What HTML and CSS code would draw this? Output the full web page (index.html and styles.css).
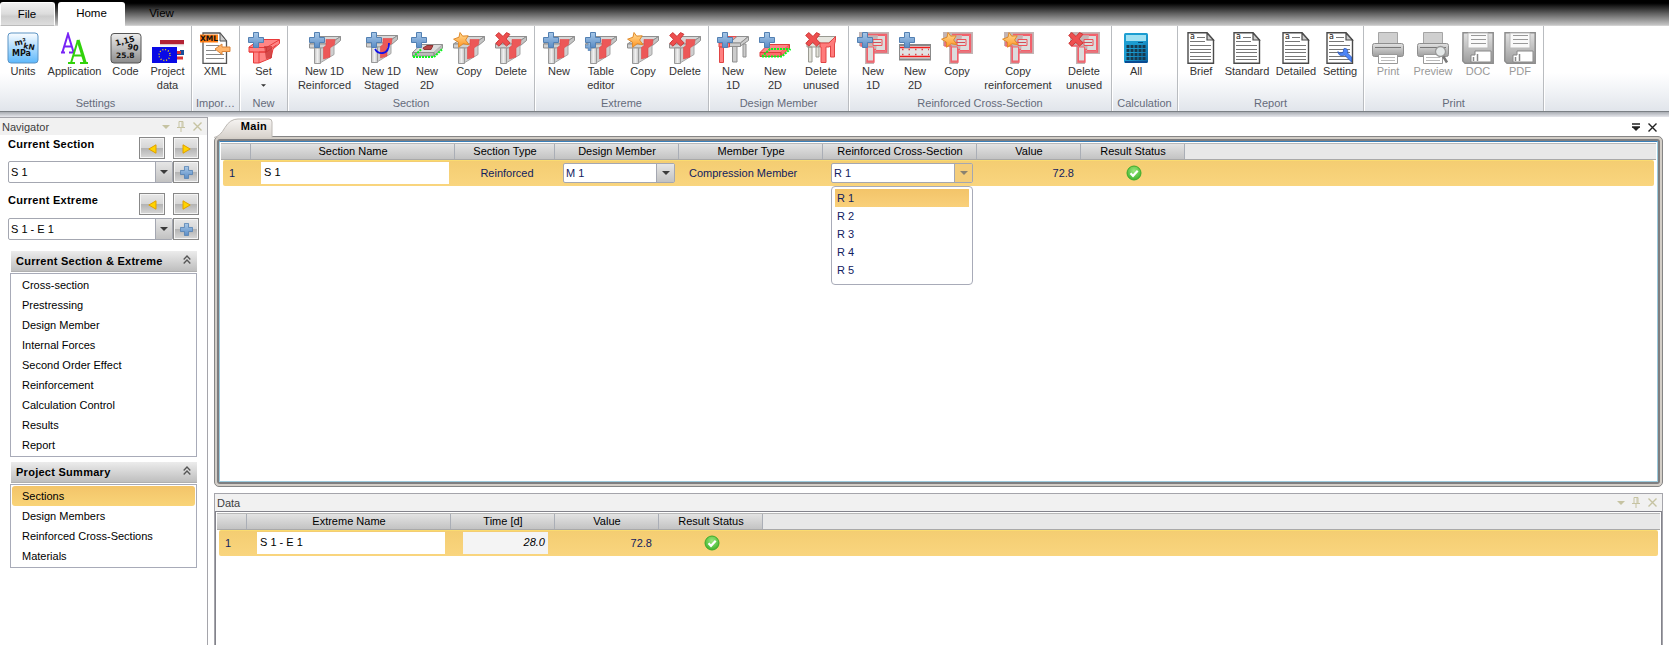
FILE: index.html
```html
<!DOCTYPE html>
<html lang="en">
<head>
<meta charset="utf-8">
<title>Section design</title>
<link rel="stylesheet" href="styles.css">
</head>
<body>
<svg class="defs" aria-hidden="true">
  <defs>
    <linearGradient id="gBlue" x1="0" y1="0" x2="0" y2="1"><stop offset="0" stop-color="#a9c9e8"/><stop offset="1" stop-color="#5a8cc6"/></linearGradient>
    <linearGradient id="gStar" x1="0" y1="0" x2="0" y2="1"><stop offset="0" stop-color="#ffdf9a"/><stop offset="1" stop-color="#ff9320"/></linearGradient>
    <linearGradient id="gUnits" x1="0" y1="0" x2="0" y2="1"><stop offset="0" stop-color="#fbfdff"/><stop offset="1" stop-color="#5db8fb"/></linearGradient>
    <linearGradient id="gCode" x1="0" y1="0" x2="0" y2="1"><stop offset="0" stop-color="#ededed"/><stop offset="1" stop-color="#8b8b8b"/></linearGradient>
    <linearGradient id="gCalc" x1="0" y1="0" x2="1" y2="1"><stop offset="0" stop-color="#1e9fd2"/><stop offset=".5" stop-color="#1a9bd0"/><stop offset="1" stop-color="#0a5f9c"/></linearGradient>
    <linearGradient id="gGrey" x1="0" y1="0" x2="0" y2="1"><stop offset="0" stop-color="#e2e2e2"/><stop offset="1" stop-color="#9c9c9c"/></linearGradient>
    <linearGradient id="gWeb" x1="0" y1="0" x2="1" y2="0"><stop offset="0" stop-color="#c4c4c4"/><stop offset=".5" stop-color="#f0f0f0"/><stop offset="1" stop-color="#c4c4c4"/></linearGradient>
    <radialGradient id="gOk" cx=".5" cy=".35" r=".6"><stop offset="0" stop-color="#9be87c"/><stop offset="1" stop-color="#47b735"/></radialGradient>
  </defs>
  <symbol id="plus" viewBox="0 0 16 16"><path d="M5.5.5h5v5h5v5h-5v5h-5v-5h-5v-5h5z" fill="url(#gBlue)" stroke="#5380b2"/></symbol>
  <symbol id="star" viewBox="0 0 18 16"><path d="M7 .5l2.6 3.6 5.6-.3-2.6 4.2 3.4 4.7-5.8-1-4.6 3.6-.2-5.2L.6 7.200l5.400-2z" fill="url(#gStar)" stroke="#e08a2a"/></symbol>
  <symbol id="cross" viewBox="0 0 16 15"><path d="M3.800.600L8 4.500 11.500.600l3.400 1.700-3.800 4.600 4 4-3.600 3.200L7.700 10.300 4 14.200.800 11.400l3.700-4.100L.700 3.400z" fill="#ee4f4f" stroke="#cc3838"/></symbol>
  <symbol id="beam" viewBox="0 0 32 32">
    <path d="M11 4.500h20.500L20.500 12H.500z" fill="#d6d6d6" stroke="#8f8f8f"/>
    <path d="M20.500 12l11-7.500v4l-6 5-5 2.500z" fill="#c4c4c4" stroke="#8f8f8f"/>
    <path d="M.500 12h20v4H.500z" fill="#d0d0d0" stroke="#8f8f8f"/>
    <path d="M11 16.500l14-3v9L11 31z" fill="#cfcfcf" stroke="#a5a5a5"/>
    <path d="M17 7.500h9l-.500 5-4.500 3.500v9l-6.500 2v-11.500l2.500-2z" fill="#ec5858" stroke="#e04848" stroke-width=".600"/>
    <path d="M5.500 16h6v15.500h-6z" fill="url(#gWeb)" stroke="#999"/>
  </symbol>
  <symbol id="slab" viewBox="0 0 32 32"><path d="M10 12.500h21.500L23 20.500H1.500z" fill="#dcdcdc" stroke="#8f8f8f"/><path d="M1.500 20.500H23v3.500H1.500zM31.500 12.500v3.500L23 24v-3.500" fill="#bbb" stroke="#8f8f8f"/><path d="M12 16l4-2.500h6l-2 4h-7z" fill="#b64545" stroke="#8d3434"/><path d="M2 25l8-7.500M2 25h21l9-8.500" fill="none" stroke="#0bf51c" stroke-width="2" stroke-dasharray="2 1"/></symbol>
  <symbol id="slabred" viewBox="0 0 32 32"><path d="M9 12.500h21.500L22 20.500H1z" fill="#ff8585" stroke="#dd3d3d"/><path d="M1 20.500h21v4H1zM30.500 12.500V16L22 24.500v-4" fill="#ff6b6b" stroke="#dd3d3d"/><path d="M3 24.500l8-7.500h20M3 24.500h20l8.500-7.500" fill="none" stroke="#0bf51c" stroke-width="2" stroke-dasharray="2 1"/></symbol>
  <symbol id="table1d" viewBox="0 0 32 32"><path d="M10 4.500h10L12.500 11H2z" fill="#ff8b8b" stroke="#e05050"/><path d="M20 4.500h11L23.500 11h-11z" fill="#ddd" stroke="#8f8f8f"/><path d="M23.500 11l8-6.500v4L23.500 14zM12.500 11h11v3.500h-11zM15.500 14.500h4.500V30h-4.500zM26 12h3v13h-3z" fill="#ccc" stroke="#8f8f8f"/><path d="M2 11h10.500v4H2zM2.500 15h4v15.500h-4z" fill="#ff8080" stroke="#e04545"/></symbol>
  <symbol id="tabledel" viewBox="0 0 32 32"><path d="M10 4.500h21L23.500 11H2z" fill="#e6e6df" stroke="#9a9a92"/><path d="M2 11h13v4H2zM3.500 15H7v15H3.500zM11 14h3v11h-3z" fill="#e3e3db" stroke="#9a9a92"/><path d="M15 11h9l6.500-6.500v4L29.500 12v13h-4V14L24 15h-3v15.500h-5V15h-1z" fill="#ff7b7b" stroke="#e04545"/></symbol>
  <symbol id="cs" viewBox="0 0 32 32"><path d="M2 0h30v22H17v10H8V14H2z" fill="#c3b5b5"/><path d="M4 10.500h18v-4h4v11H17V30H10V14H4zM11 2.500h18.500v17.500H17" fill="none" stroke="#f2606b" stroke-width="1.300"/><path d="M10.500 15h6v14h-6zM21 3.500h7.500v15H19" fill="#dcdcdc" stroke="#f2606b"/><path d="M16 7.500h9v6h-9z" fill="#ddd" stroke="#ef5058"/><path d="M16 10.500h8" stroke="#d34d56"/></symbol>
  <symbol id="cs2d" viewBox="0 0 32 32"><path d="M.500 12.500h31v15H.500z" fill="#e2e2e2" stroke="#8a8a8a"/><path d="M0 13h32M0 27.500h32" stroke="#888" stroke-width="2"/><path d="M1 15.500h30M1 24.500h30" stroke="#f01e1e" stroke-width="1.400"/><path d="M3 17.500h27M3 22.500h27" stroke="#d44" stroke-width="1.500" stroke-dasharray="1.500 5"/></symbol>
  <symbol id="page" viewBox="0 0 28 32"><path d="M1 .700h19l6.500 7.500v23H1z" fill="#fff" stroke="#4a4a4a" stroke-width="1.400"/><path d="M20 1v7h6.500z" fill="#ccc" stroke="#4a4a4a" stroke-width="1.200"/><path d="M10 5.500h8M3 9.500h15M3 13.500h21M3 17.500h21M3 20.500h21M3 24.500h21M3 27.500h21" stroke="#777"/></symbol>
  <symbol id="printer" viewBox="0 0 32 32"><path d="M6.500.500h19V12h-19z" fill="#cfcfcf" stroke="#a5a5a5"/><rect x=".500" y="11.500" width="31" height="13" rx="2" fill="url(#gGrey)" stroke="#8e8e8e"/><path d="M3 15.500h26" stroke="#777"/><path d="M6.500 22.500h19v9h-19z" fill="#fff" stroke="#999"/><path d="M9 25.500h14M9 28.500h14" stroke="#bbb"/></symbol>
  <symbol id="disk" viewBox="0 0 32 32"><path d="M1 .800h30.200v30.400H3L.800 29z" fill="url(#gGrey)" stroke="#8d8d8d" stroke-width="1.500"/><path d="M6 1h20v15H6z" fill="#fafafa" stroke="#bbb"/><path d="M9 3.500h15M9 7.500h15M9 11.500h15" stroke="#999"/><path d="M9 23h4v-4h16v11H9z" fill="#fff" stroke="#888"/><path d="M15.500 22v7M11.500 25v4" stroke="#888" stroke-width="1.500"/></symbol>
  <symbol id="ok" viewBox="0 0 16 16"><circle cx="8" cy="8" r="7" fill="url(#gOk)" stroke="#3dab2c"/><path d="M4.500 8.300l2.500 2.500 4.700-5" fill="none" stroke="#fff" stroke-width="2.200"/></symbol>
  <symbol id="caret" viewBox="0 0 8 4"><path d="M0 0h8L4 4z" fill="currentColor"/></symbol>
  <symbol id="pin" viewBox="0 0 8 11"><path d="M2 6.500V.500h4v6M5 1v5M0 6.500h8M4 7v4" fill="none" stroke="currentColor"/></symbol>
  <symbol id="close" viewBox="0 0 9 9"><path d="M.500.500l8 8M8.500.500l-8 8" fill="none" stroke="currentColor" stroke-width="1.400"/></symbol>
  <symbol id="chev" viewBox="0 0 8 9"><path d="M.700 4.500L4 1l3.300 3.500M.700 8.500L4 5l3.300 3.500" fill="none" stroke="#555" stroke-width="1.300"/></symbol>
  <symbol id="left" viewBox="0 0 9 10"><path d="M8 .800v8.400L.800 5z" fill="#ffd400" stroke="#e0a000"/></symbol>
  <symbol id="right" viewBox="0 0 9 10"><path d="M1 .800v8.400L8.200 5z" fill="#ffd400" stroke="#e0a000"/></symbol>
</svg>

<header class="tabs">
  <div class="tab file">File</div><div class="tab home">Home</div><div class="tab view">View</div>
</header>

<div class="ribbon">
  <section class="group g-settings">
    <div class="buttons">
      <div class="btn"><svg class="ico" viewBox="0 0 32 32"><rect x="1" y="1" width="30" height="30" rx="3" fill="url(#gUnits)" stroke="#5b93c4"/><g font-family="DejaVu Sans" font-weight="bold" fill="#111"><text x="8" y="14" font-size="8" transform="rotate(-12 8 14)">m²</text><text x="16" y="16" font-size="7.500" transform="rotate(12 16 16)">kN</text><text x="5" y="24" font-size="8">MPa</text></g></svg><span>Units</span></div>
      <div class="btn"><svg class="ico" viewBox="0 0 32 32"><path d="M2 20.500h4M10 20.500h6M3.500 20L9 2l5.500 18M5.500 14.500h7" fill="none" stroke="#7723f5" stroke-width="2"/><path d="M9 31h7M21 31h8M12 31l7-23M14.500 23.500h9.500" fill="none" stroke="#31d20b" stroke-width="2"/><path d="M19 8l7 22.500" stroke="#31d20b" stroke-width="3.200"/></svg><span>Application</span></div>
      <div class="btn"><svg class="ico" viewBox="0 0 32 32"><rect x="1" y="1.500" width="30" height="29.500" rx="3" fill="url(#gCode)" stroke="#555"/><g font-family="DejaVu Sans" font-weight="bold" fill="#111"><text x="6" y="14" font-size="8" transform="rotate(-14 6 14)">1,15</text><text x="17" y="17" font-size="8" transform="rotate(10 17 17)">90</text><text x="6" y="26" font-size="7.500">25.8</text></g></svg><span>Code</span></div>
      <div class="btn"><svg class="ico" viewBox="0 0 32 32"><path d="M8 8h24v4.500H8z" fill="#b22234"/><path d="M8 12.500h24v2H8z" fill="#eee"/><path d="M25 20h3v-2h4v5h-7z" fill="#1b4f9b"/><path d="M25 19h4v3h-4zM25 24.500h6v3h-6z" fill="#d33"/><path d="M0 15h25v16H0z" fill="#0909e6"/><circle cx="12.500" cy="23" r="5.500" fill="none" stroke="#ffe600" stroke-width="1.300" stroke-dasharray="1 1.880"/></svg><span>Project<br>data</span></div>
    </div><div class="name">Settings</div>
  </section>
  <section class="group g-import">
    <div class="buttons"><div class="btn"><svg class="ico" viewBox="0 0 32 32"><path d="M4 1h17l6.500 8v22.500H4z" fill="#fff" stroke="#555" stroke-width="1.300"/><path d="M21 1v8h6.500z" fill="#ccc" stroke="#555"/><path d="M7 13.500h13M7 18.500h10M7 22.500h18M7 26.500h18" stroke="#888"/><path d="M1 2.500h18v8H1z" fill="#ff7d13"/><text x="1" y="9.300" font-family="DejaVu Sans" font-weight="bold" font-size="7.500" fill="#111">XML</text><path d="M16 17l7-5v3h8v4.500h-8v3z" fill="#ffb56a" stroke="#dc8438"/></svg><span>XML</span></div></div>
    <div class="name">Impor…</div>
  </section>
  <section class="group g-new">
    <div class="buttons"><div class="btn"><svg class="ico" viewBox="0 0 32 32"><path d="M12 7.500h19.500v4L25 17l-2 9-12 5H5.500V20H1v-5z" fill="#ff8585" stroke="#e83a3a"/><path d="M1 15.500h17.500L31 8M18.500 15.500V20H11v11M18.500 20l10-7M1 20h17" fill="none" stroke="#e83a3a"/><path d="M16 14h8v12l-6 1z" fill="#c83737" opacity=".75"/><use href="#plus" x="0" y="0" width="16" height="16"/></svg><span>Set</span><svg class="setcaret"><use href="#caret"/></svg></div></div>
    <div class="name">New</div>
  </section>
  <section class="group g-section">
    <div class="buttons">
      <div class="btn"><svg class="ico" viewBox="0 0 32 32"><use href="#beam"/><use href="#plus" width="16" height="16"/></svg><span>New 1D<br>Reinforced</span></div>
      <div class="btn"><svg class="ico" viewBox="0 0 32 32"><use href="#beam" y="-1"/><path d="M9 17q3 5 8 4 6-1 6-10" fill="none" stroke="#1111e8" stroke-width="1.800"/><use href="#plus" width="16" height="16"/></svg><span>New 1D<br>Staged</span></div>
      <div class="btn"><svg class="ico" viewBox="0 0 32 32"><use href="#slab"/><use href="#plus" width="16" height="16"/></svg><span>New<br>2D</span></div>
      <div class="btn"><svg class="ico" viewBox="0 0 32 32"><use href="#beam"/><use href="#star" width="18" height="16"/></svg><span>Copy</span></div>
      <div class="btn"><svg class="ico" viewBox="0 0 32 32"><use href="#beam"/><use href="#cross" width="16" height="15"/></svg><span>Delete</span></div>
    </div><div class="name">Section</div>
  </section>
  <section class="group g-extreme">
    <div class="buttons">
      <div class="btn"><svg class="ico" viewBox="0 0 32 32"><use href="#beam"/><use href="#plus" width="16" height="16"/></svg><span>New</span></div>
      <div class="btn"><svg class="ico" viewBox="0 0 32 32"><use href="#beam"/><use href="#plus" x="0" y="10" width="9" height="9"/><use href="#plus" width="16" height="16"/></svg><span>Table<br>editor</span></div>
      <div class="btn"><svg class="ico" viewBox="0 0 32 32"><use href="#beam"/><use href="#star" width="18" height="16"/></svg><span>Copy</span></div>
      <div class="btn"><svg class="ico" viewBox="0 0 32 32"><use href="#beam"/><use href="#cross" width="16" height="15"/></svg><span>Delete</span></div>
    </div><div class="name">Extreme</div>
  </section>
  <section class="group g-design">
    <div class="buttons">
      <div class="btn"><svg class="ico" viewBox="0 0 32 32"><use href="#table1d"/><use href="#plus" width="16" height="16"/></svg><span>New<br>1D</span></div>
      <div class="btn"><svg class="ico" viewBox="0 0 32 32"><use href="#slabred"/><use href="#plus" width="16" height="16"/></svg><span>New<br>2D</span></div>
      <div class="btn"><svg class="ico" viewBox="0 0 32 32"><use href="#tabledel"/><use href="#cross" width="16" height="15"/></svg><span>Delete<br>unused</span></div>
    </div><div class="name">Design Member</div>
  </section>
  <section class="group g-rcs">
    <div class="buttons">
      <div class="btn"><svg class="ico" viewBox="0 0 32 32"><use href="#cs"/><use href="#plus" width="16" height="16"/></svg><span>New<br>1D</span></div>
      <div class="btn"><svg class="ico" viewBox="0 0 32 32"><use href="#cs2d"/><use href="#plus" width="16" height="16"/></svg><span>New<br>2D</span></div>
      <div class="btn"><svg class="ico" viewBox="0 0 32 32"><use href="#cs"/><use href="#star" width="18" height="16"/></svg><span>Copy</span></div>
      <div class="btn"><svg class="ico" viewBox="0 0 32 32"><use href="#cs"/><use href="#star" width="18" height="16"/></svg><span>Copy<br>reinforcement</span></div>
      <div class="btn"><svg class="ico" viewBox="0 0 32 32"><use href="#cs"/><use href="#cross" width="16" height="15"/></svg><span>Delete<br>unused</span></div>
    </div><div class="name">Reinforced Cross-Section</div>
  </section>
  <section class="group g-calc">
    <div class="buttons"><div class="btn"><svg class="ico" viewBox="0 0 32 32"><rect x="4" y="1" width="24" height="30" rx="1.500" fill="url(#gCalc)"/><path d="M6 3h20v6H6z" fill="#9fe0f2"/><path d="M5 30h22" stroke="#0a4b92" stroke-width="2"/><path d="M18 10.500h5" stroke="#064a78"/><path d="M6.500 14.500h19M6.500 18.500h19M6.500 22.500h19M6.500 26.500h19" stroke="#173a4f" stroke-width="3" stroke-dasharray="3 1"/></svg><span>All</span></div></div>
    <div class="name">Calculation</div>
  </section>
  <section class="group g-report">
    <div class="buttons">
      <div class="btn"><svg class="ico page" viewBox="0 0 28 32"><use href="#page" width="28" height="32"/><text class="pa" x="3" y="7">a</text></svg><span>Brief</span></div>
      <div class="btn"><svg class="ico page" viewBox="0 0 28 32"><use href="#page" width="28" height="32"/><text class="pa" x="3" y="7">a</text></svg><span>Standard</span></div>
      <div class="btn"><svg class="ico page" viewBox="0 0 28 32"><use href="#page" width="28" height="32"/><text class="pa" x="3" y="7">a</text></svg><span>Detailed</span></div>
      <div class="btn"><svg class="ico page" viewBox="0 0 28 32"><use href="#page" width="28" height="32"/><text class="pa" x="3" y="7">a</text><path d="M18 16.500l-1 4-3.500.500-1.500-1.500c0 4 4 5 6.500 3.500l7 7v-5l-4-4c1-3-1-5-3.500-4.500z" fill="#4d86f7" stroke="#2956b8" stroke-width=".800"/></svg><span>Setting</span></div>
    </div><div class="name">Report</div>
  </section>
  <section class="group g-print">
    <div class="buttons">
      <div class="btn off"><svg class="ico"><use href="#printer"/></svg><span>Print</span></div>
      <div class="btn off"><svg class="ico" viewBox="0 0 32 32"><use href="#printer"/><path d="M26 24l4 6.500" stroke="#777" stroke-width="2.500"/><circle cx="23.500" cy="19.500" r="5" fill="#e4e8e8" stroke="#999" stroke-width="1.300"/></svg><span>Preview</span></div>
      <div class="btn off"><svg class="ico"><use href="#disk"/></svg><span>DOC</span></div>
      <div class="btn off"><svg class="ico"><use href="#disk"/></svg><span>PDF</span></div>
    </div><div class="name">Print</div>
  </section>
</div>
<div class="shadow"></div>

<main class="work">
  <aside class="nav">
    <div class="bar"><span>Navigator</span><div class="tools"><svg class="t-caret"><use href="#caret"/></svg><svg class="t-pin"><use href="#pin"/></svg><svg class="t-x"><use href="#close"/></svg></div></div>
    <div class="picker first">
      <div class="line"><b>Current Section</b><div class="sq"><svg class="arr"><use href="#left"/></svg></div><div class="sq"><svg class="arr"><use href="#right"/></svg></div></div>
      <div class="line"><div class="combo"><span>S 1</span><i><svg class="c-caret"><use href="#caret"/></svg></i></div><div class="sq add"><svg class="add-ico"><use href="#plus"/></svg></div></div>
    </div>
    <div class="picker second">
      <div class="line"><b>Current Extreme</b><div class="sq"><svg class="arr"><use href="#left"/></svg></div><div class="sq"><svg class="arr"><use href="#right"/></svg></div></div>
      <div class="line"><div class="combo"><span>S 1 - E 1</span><i><svg class="c-caret"><use href="#caret"/></svg></i></div><div class="sq add"><svg class="add-ico"><use href="#plus"/></svg></div></div>
    </div>
    <div class="panel">
      <div class="phead"><b>Current Section &amp; Extreme</b><svg class="chev"><use href="#chev"/></svg></div>
      <ul><li>Cross-section</li><li>Prestressing</li><li>Design Member</li><li>Internal Forces</li><li>Second Order Effect</li><li>Reinforcement</li><li>Calculation Control</li><li>Results</li><li>Report</li></ul>
    </div>
    <div class="panel">
      <div class="phead"><b>Project Summary</b><svg class="chev"><use href="#chev"/></svg></div>
      <ul><li class="sel">Sections</li><li>Design Members</li><li>Reinforced Cross-Sections</li><li>Materials</li></ul>
    </div>
  </aside>

  <div class="content">
    <div class="doctabs">
      <div class="doctab"><svg class="tabshape" viewBox="0 0 59 19"><defs><linearGradient id="gTab" x1="0" y1="0" x2="0" y2="1"><stop offset="0" stop-color="#f6f4f2"/><stop offset="1" stop-color="#d8d3cd"/></linearGradient></defs><path d="M0 19Q6 18 11 9 16 .500 24 .500h31q3 0 3 3V19" fill="url(#gTab)" stroke="#bdb9b4"/></svg><b>Main</b></div>
      <div class="doctools"><svg class="d-menu" viewBox="0 0 8 8"><path d="M0 1h8M0 4h8" stroke="#222" stroke-width="1.600"/><path d="M0 4h8L4 8z" fill="#222"/></svg><svg class="d-x"><use href="#close"/></svg></div>
    </div>
    <div class="frame"><div class="frame-mid"><div class="frame-in">
      <div class="grid cols-main head"><div></div><div>Section Name</div><div>Section Type</div><div>Design Member</div><div>Member Type</div><div>Reinforced Cross-Section</div><div>Value</div><div>Result Status</div></div>
      <div class="grid cols-main row">
        <div class="num">1</div>
        <div class="cell-in"><div class="input">S 1</div></div>
        <div class="mid">Reinforced</div>
        <div class="cell-combo"><div class="combo sm"><span>M 1</span><i><svg class="c-caret"><use href="#caret"/></svg></i></div></div>
        <div class="lft">Compression Member</div>
        <div class="cell-combo open"><div class="combo sm"><span>R 1</span><i><svg class="c-caret"><use href="#caret"/></svg></i></div>
          <div class="menu"><div class="hot">R 1</div><div>R 2</div><div>R 3</div><div>R 4</div><div>R 5</div></div></div>
        <div class="rgt">72.8</div>
        <div class="mid"><svg class="ok"><use href="#ok"/></svg></div>
      </div>
    </div></div></div>

    <div class="data">
      <div class="bar"><span>Data</span><div class="tools"><svg class="t-caret"><use href="#caret"/></svg><svg class="t-pin"><use href="#pin"/></svg><svg class="t-x"><use href="#close"/></svg></div></div>
      <div class="dbody">
        <div class="grid cols-data head"><div></div><div>Extreme Name</div><div>Time [d]</div><div>Value</div><div>Result Status</div></div>
        <div class="grid cols-data row">
          <div class="num">1</div>
          <div class="cell-in"><div class="input">S 1 - E 1</div></div>
          <div class="cell-time"><div class="input ro">28.0</div></div>
          <div class="rgt">72.8</div>
          <div class="mid"><svg class="ok"><use href="#ok"/></svg></div>
        </div>
      </div>
    </div>
  </div>
</main>
</body>
</html>
```
FILE: styles.css
```css
* { box-sizing: border-box; }
html, body { height: 100%; }
body { margin: 0; height: 645px; overflow: hidden; background: #fff; color: #000; font: 11px/14px "Liberation Sans", Arial, sans-serif; display: flex; flex-direction: column; }
svg { display: block; flex: none; }
.defs { position: absolute; width: 0; height: 0; }
b { letter-spacing: .27px; }

/* window tabs */
.tabs { flex: none; height: 26px; display: flex; align-items: flex-end; background: linear-gradient(#000 0, #000 12%, #606060 52%, #c6c6c6 97%, #e6e6e6 100%); }
.tab { height: 24px; line-height: 24px; text-align: center; font-size: 11.5px; }
.file { width: 55px; margin-right: 3px; padding-right: 1px; line-height: 23px; border: 1px solid #fff; border-bottom-color: #bbb; border-radius: 3px 3px 0 0; background: linear-gradient(#f1f1f1, #dcdcdc 50%, #cdcdcd 60%, #dedede); }
.home { width: 67px; background: #fff; border-radius: 3px 3px 0 0; line-height: 23px; }
.view { width: 73px; line-height: 23px; }

/* ribbon */
.ribbon { flex: none; height: 85px; display: flex; background: linear-gradient(#fff 55%, #f2f4f7 75%, #e1e5eb); }
.group { display: flex; flex-direction: column; justify-content: space-between; border-right: 1px solid #b9bcc0; padding: 6px 0 1px; box-shadow: 1px 0 0 #fff; }
.buttons { display: grid; }
.btn { display: flex; flex-direction: column; align-items: center; text-align: center; color: #333; white-space: nowrap; }
.btn span { line-height: 14px; }
.ico { width: 32px; height: 32px; }
.ico.page { width: 28px; }
.pa { font: 8px "DejaVu Sans", sans-serif; fill: #111; }
.off { color: #999; }
.name { text-align: center; color: #656b7b; line-height: 14px; }
.setcaret { width: 5px; height: 3px; margin-top: 6px; }
.g-settings { width: 192px; } .g-settings .buttons { padding-left: 2px; grid-template-columns: 42px 61px 41px 43px; }
.g-import { width: 48px; } .g-import .buttons { grid-template-columns: 46px; }
.g-new { width: 48px; }
.g-section { width: 247px; } .g-section .buttons { padding-left: 4px; grid-template-columns: 65px 49px 42px 42px 42px; }
.g-extreme { width: 174px; } .g-extreme .buttons { padding-left: 3px; grid-template-columns: repeat(4, 42px); }
.g-design { width: 140px; } .g-design .buttons { padding-left: 3px; grid-template-columns: 42px 42px 50px; }
.g-rcs { width: 263px; } .g-rcs .buttons { padding-left: 3px; grid-template-columns: 42px 42px 42px 80px 52px; }
.g-calc { width: 66px; } .g-calc .buttons { padding-left: 3px; grid-template-columns: 42px; }
.g-report { width: 186px; } .g-report .buttons { padding-left: 3px; grid-template-columns: 40px 52px 46px 42px; }
.g-print { width: 180px; } .g-print .buttons { padding-left: 3px; grid-template-columns: 42px 48px 42px 42px; }
.shadow { flex: none; height: 6px; border-top: 1px solid #7b8085; background: linear-gradient(#a9adb3, #e6e7ec); }

/* work area */
.work { flex: 1; min-height: 0; display: flex; }
.nav { width: 208px; border-top: 1px solid #a5a5ab; border-right: 1px solid #a5a5ab; }
.bar { display: flex; justify-content: space-between; height: 17px; background: #f1f1f1; color: #3d3d3d; line-height: 18px; }
.bar > span { padding-left: 2px; }
.tools { display: flex; align-items: center; color: #c6c3a2; padding-right: 5px; }
.t-caret { width: 8px; height: 4px; margin-right: 7px; }
.t-pin { width: 8px; height: 11px; margin-right: 8px; }
.t-x { width: 9px; height: 9px; }
.picker { width: 199px; padding-left: 8px; display: flex; flex-direction: column; gap: 2px; }
.picker.first { margin-top: 2px; }
.picker.second { margin-top: 10px; }
.picker.second .line:last-child { margin-top: 1px; }
.line { display: flex; }
.line > b { flex: 1; line-height: 15px; }
.line > b ~ .sq + .sq { margin-left: 8px; }
.sq { width: 26px; height: 22px; border: 1px solid #888; box-shadow: inset 0 0 0 1px #f4f4f4; background: linear-gradient(#e8e8e8, #d7d7d7 48%, #b4b4b4 52%, #d8d8d8); display: flex; align-items: center; justify-content: center; }
.arr { width: 9px; height: 10px; margin-top: 2px; }
.add-ico { width: 13px; height: 13px; }
.combo { flex: 1; height: 22px; display: flex; border: 1px solid #a4a7b1; border-radius: 2px; background: #fff; }
.combo > span { flex: 1; padding-left: 2px; line-height: 20px; }
.combo > i { width: 17px; border-left: 1px solid #a4a7b1; background: linear-gradient(#e6e6e6, #c2c2c2); display: flex; align-items: center; justify-content: center; color: #3b3b3b; }
.c-caret { width: 8px; height: 4px; }
.panel { width: 187px; margin: 11px 0 0 10px; }
.panel + .panel { margin-top: 5px; }
.phead { height: 21px; margin-left: 1px; padding: 0 6px 0 5px; border-bottom: 1px solid #b0b0b0; display: flex; align-items: center; justify-content: space-between; background: linear-gradient(#ececec, #bebebe); }
.chev { width: 8px; height: 9px; margin-top: -3px; }
ul { margin: 1px 0 0; padding: 1px; list-style: none; border: 1px solid #a8abb8; }
li { height: 20px; line-height: 20px; padding-left: 10px; }
.sel { background: linear-gradient(#f3c469, #f9d478); border-radius: 3px; }

.content { flex: 1; padding: 1px 6px 0; display: flex; flex-direction: column; }
.doctabs { height: 18px; display: flex; justify-content: space-between; }
.doctab { position: relative; width: 59px; height: 19px; text-align: right; padding-right: 6px; line-height: 17px; }
.tabshape { position: absolute; left: 0; top: 0; width: 59px; height: 20px; }
.doctab b { position: relative; }
.doctools { display: flex; align-items: center; gap: 8px; padding-right: 6px; color: #222; }
.d-menu { width: 8px; height: 8px; }
.d-x { width: 9px; height: 9px; }
.frame { height: 351px; border: 1px solid #858585; border-radius: 5px; background: #d3cec7; padding: 2px; }
.frame-mid { height: 100%; border-radius: 3px; background: #7e7e80; padding: 2px; }
.frame-in { height: 100%; background: #fff; border: 1px solid #9ccbdd; border-top-color: #3a7fb8; padding: 1px 1px 0; }
.frame .head { width: 1435px; }
.grid { display: grid; }
.cols-main { grid-template-columns: 30px 204px 100px 124px 144px 154px 104px 104px; }
.cols-data { grid-template-columns: 30px 204px 104px 104px 104px; }
.head { height: 17px; border-top: 1px solid #b8b8b8; border-bottom: 1px solid #a9a9a9; background: #e8e8e8; text-align: center; line-height: 14px; }
.head > div { border-right: 1px solid #aaaeb6; background: linear-gradient(#e3e3e3, #c3c3c3); padding-left: 1px; }
.row { height: 26px; margin: 0 2px; color: #11215f; background: linear-gradient(#f4cd72, #f9d57e); border-top: 1px solid #fadb70; border-radius: 2px; line-height: 25px; }
.row > div { margin-left: -2px; margin-right: 2px; height: 25px; }
.row > .num { padding-left: 8px; }
.cell-in { padding: 1px 6px 0 10px; }
.input { height: 22px; background: #fff; color: #000; padding-left: 3px; line-height: 21px; }
.cell-time { padding: 1px 7px 0 12px; }
.input.ro { background: #f4f4f4; font-style: italic; text-align: right; padding-right: 3px; }
.mid { display: flex; justify-content: center; padding-left: 4px; }
.lft { padding-left: 10px; }
.rgt { text-align: right; padding-right: 7px; }
.ok { width: 16px; height: 16px; margin: 4px 2px 0 0; }
.cell-combo { padding: 2px 4px 0 8px; position: relative; }
.combo.sm { height: 20px; }
.combo.sm > span { line-height: 18px; }
.combo.sm > i { width: 18px; }
.open .combo > i { background: #f4cd7a; color: #8a8270; }
.menu { position: absolute; left: 8px; right: 4px; top: 25px; height: 99px; padding: 2px 3px; background: #fff; border: 1px solid #a8abb8; border-radius: 4px; line-height: 18px; z-index: 2; }
.menu > div { height: 18px; padding-left: 2px; }
.hot { background: linear-gradient(#f3c469, #f9d07a); }

.data { flex: 1; margin-top: 6px; border: 1px solid #a5a5ab; border-bottom: 0; }
.data .tools { padding-right: 5px; }
.dbody { height: 100%; border: 1px solid #83838b; padding: 1px 1px 0; }
.dbody .head { width: 1443px; }
```
